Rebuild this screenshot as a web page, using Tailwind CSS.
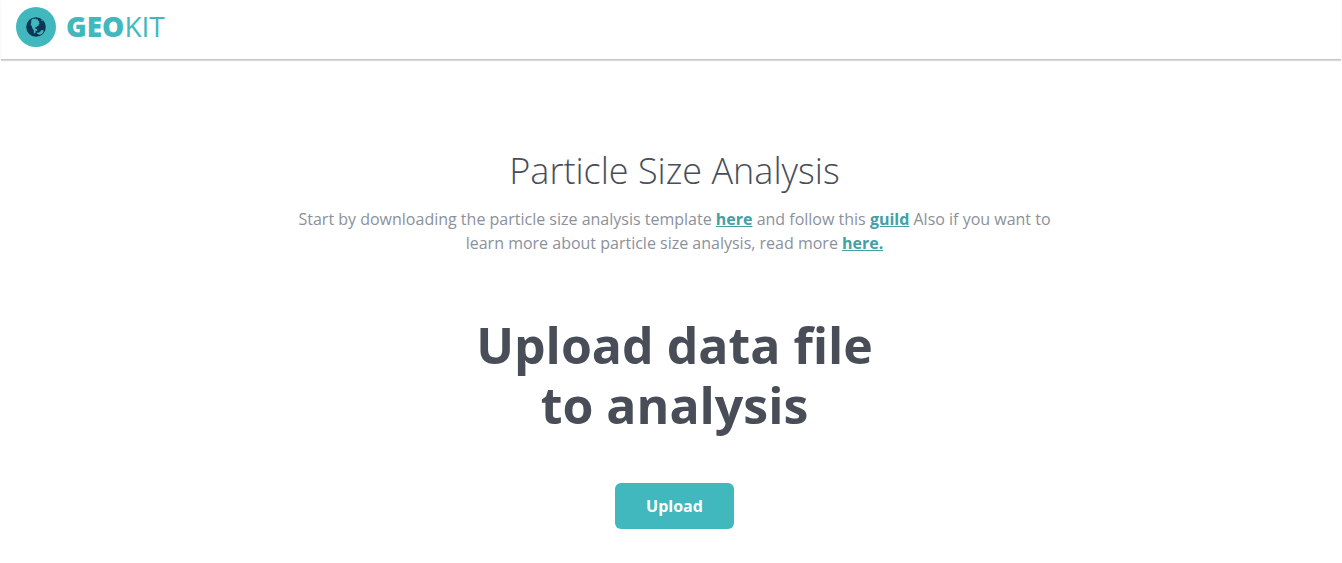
<!DOCTYPE html>
<html lang="en">
<head>
<meta charset="utf-8">
<meta name="viewport" content="width=device-width, initial-scale=1">
<title>Geokit</title>
<script src="https://cdn.jsdelivr.net/npm/@tailwindcss/browser@4"></script>
</head>
<body class="bg-white font-['Open_Sans',sans-serif]">
<header class="mx-px flex h-[60px] items-start border-b border-[#c6c6c6] px-[15px] pt-[7px] shadow-[0_1px_1px_rgba(0,0,0,0.14)]">
  <a href="#" class="flex items-start gap-[10px] text-[28px] leading-[38px] text-[#41b8bd]">
    <svg class="size-10" viewBox="0 0 40 40" aria-hidden="true">
      <circle cx="20" cy="20" r="20" fill="#41b8bd"/>
      <circle cx="20" cy="20" r="9.8" fill="#0c3656"/>
      <path fill="#41b8bd" d="M15.2 13.2 17 11.6l1.4.6.8-1 1.2 1.3 1.4-.2.2 1.3 1.5.8-.9 1 1.2 1-1.1.8.2 1.3-1.6.5-1.2 1.5-1.2-.2.3 1.3 1.3.3 1 1-.8 1.1-1-.4-.3 1.8-.8 1.4-.9-1.6.1-2.2-1.4-1.6-.6-2.3-1.1-1.2.5-2.4z"/>
      <path fill="#41b8bd" d="M20.6 25.6l2 .2 1.8-1.2.8-1.4 2-.2.4 1.6-1.2 1.9-2.4 1.2-2.6-.6z"/>
      <path fill="#41b8bd" d="m25 12.8 1-.2.8 1.1-1 .5z"/>
    </svg>
    <span><b class="font-extrabold">GEO</b><span class="font-normal">KIT</span></span>
  </a>
</header>
<main class="flex flex-col items-center pt-[84px] pr-4 pb-[34px] pl-[23px] text-center">
  <h1 class="text-[36px] leading-[54px] font-light text-[#484d58]">Particle Size Analysis</h1>
  <p class="mt-[9px] max-w-[768px] text-base text-[#8b919b]">Start by downloading the particle size analysis template <a href="#" class="font-bold text-[#43a0a5] underline">here</a> and follow this <a href="#" class="font-bold text-[#43a0a5] underline">guild</a> Also if you want to learn more about particle size analysis, read more <a href="#" class="font-bold text-[#43a0a5] underline">here.</a></p>
  <h2 class="mt-[60px] text-[50px] leading-[60px] font-bold text-[#484d58]">Upload data file<br>to analysis</h2>
  <button type="button" class="mt-[48px] h-[46px] rounded-md bg-[#41b8bd] px-[31px] text-base font-bold text-white">Upload</button>
</main>
</body>
</html>
